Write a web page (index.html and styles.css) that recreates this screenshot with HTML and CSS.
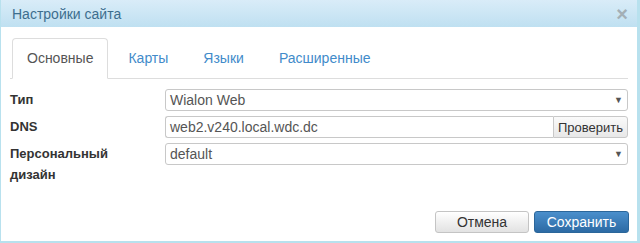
FILE: index.html
```html
<!DOCTYPE html>
<html lang="ru">
<head>
  <meta charset="UTF-8">
  <title>Настройки сайта</title>
  <link rel="stylesheet" href="styles.css">
</head>
<body>
  <div class="dialog">
    <div class="dialog-header">
      <span class="dialog-title">Настройки сайта</span>
      <span class="close">×</span>
    </div>

    <div class="dialog-body">
      <!-- Tabs -->
      <ul class="tabs">
        <li class="tab active">Основные</li>
        <li class="tab">Карты</li>
        <li class="tab">Языки</li>
        <li class="tab">Расширенные</li>
      </ul>

      <!-- Settings form -->
      <div class="form">
        <div class="form-row">
          <label class="form-label">Тип</label>
          <div class="select">Wialon Web<span class="caret">▼</span></div>
        </div>
        <div class="form-row">
          <label class="form-label">DNS</label>
          <div class="input-group">
            <div class="input">web2.v240.local.wdc.dc</div>
            <button class="check-button">Проверить</button>
          </div>
        </div>
        <div class="form-row">
          <label class="form-label">Персональный дизайн</label>
          <div class="select">default<span class="caret">▼</span></div>
        </div>
      </div>
    </div>

    <div class="dialog-footer">
      <button class="btn btn-default">Отмена</button>
      <button class="btn btn-primary">Сохранить</button>
    </div>
  </div>
</body>
</html>
```

FILE: styles.css
```css
:root {
  --frame: #b8e1ee;
  --border: #dddddd;
  --input-border: #c8c8c8;
  --link: #428bca;
  --text: #555555;
}

* {
  box-sizing: border-box;
}

body {
  margin: 0;
  padding: 0 3px 2px 1px;
  background: var(--frame);
  font-family: 'Liberation Sans', Arial, sans-serif;
  color: #333;
  height: 243px;
}

/* Dialog */
.dialog {
  height: 241px;
  background: #fff;
  display: flex;
  flex-direction: column;
}

.dialog-header {
  height: 27px;
  display: flex;
  align-items: center;
  justify-content: space-between;
  padding: 0 9px 0 11px;
  background: linear-gradient(to bottom, #d9ecf8 0%, #bfe0f1 100%);
}

.dialog-title {
  font-size: 14px;
  color: #3d6e8e;
}

.close {
  font-size: 20px;
  font-weight: bold;
  color: #a3afb6;
  line-height: 1;
}

.dialog-body {
  padding: 11px 9px 0 9px;
}

/* Tabs */
.tabs {
  list-style: none;
  margin: 0;
  padding: 0 0 0 2px;
  display: flex;
  border-bottom: 1px solid var(--border);
}

.tab {
  padding: 10px 14px;
  margin-right: 5px;
  margin-bottom: -1px;
  font-size: 14px;
  line-height: 19px;
  color: var(--link);
  border: 1px solid transparent;
  border-radius: 4px 4px 0 0;
}

.tab.active {
  color: var(--text);
  border-color: var(--border);
  border-bottom-color: #fff;
}

/* Form */
.form {
  margin-top: 10px;
  display: flex;
  flex-direction: column;
  gap: 5px;
}

.form-row {
  display: grid;
  grid-template-columns: 155px 1fr;
  align-items: start;
}

.form-label {
  max-width: 118px;
  font-size: 13px;
  font-weight: bold;
  line-height: 21px;
  color: #333;
}

.select,
.input {
  height: 22px;
  border: 1px solid var(--input-border);
  border-radius: 3px;
  padding: 0 4px;
  font-size: 14px;
  line-height: 20px;
  color: var(--text);
  position: relative;
}

.caret {
  position: absolute;
  right: 4px;
  top: 0;
  font-size: 9px;
  color: #555;
}

.input-group {
  display: flex;
}

.input {
  flex: 1;
  border-radius: 3px 0 0 3px;
  border-right: none;
}

.check-button {
  height: 22px;
  border: 1px solid var(--input-border);
  border-radius: 0 3px 3px 0;
  background: linear-gradient(to bottom, #fafafa 0%, #e8e8e8 100%);
  font-family: inherit;
  font-size: 13px;
  color: #333;
  padding: 0 4px;
}

/* Footer */
.dialog-footer {
  margin-top: auto;
  display: flex;
  justify-content: flex-end;
  gap: 5px;
  padding: 0 8px 8px 0;
}

.btn {
  width: 94px;
  height: 22px;
  border-radius: 3px;
  font-family: inherit;
  font-size: 14px;
  padding: 0;
}

.btn-default {
  background: linear-gradient(to bottom, #ffffff 0%, #e2e2e2 100%);
  border: 1px solid #c4c4c4;
  color: #333;
}

.btn-primary {
  width: 95px;
  background: linear-gradient(to bottom, #4a8fcc 0%, #2c6aa4 100%);
  border: 1px solid #2b669a;
  color: #fff;
}
```
